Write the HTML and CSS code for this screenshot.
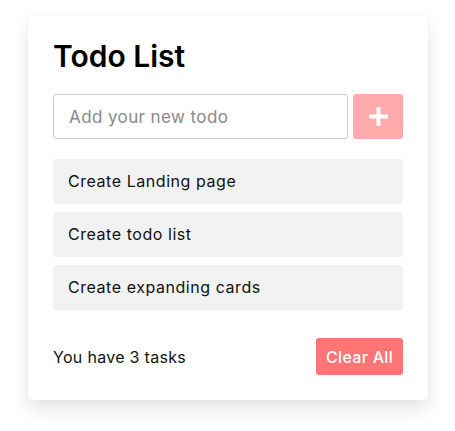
FILE: index.html
```html
<!DOCTYPE html>
<html lang="en">
<head>
<meta charset="utf-8">
<title>Todo List</title>
<link rel="stylesheet" href="styles.css">
</head>
<body>
<div class="wrapper">
  <h1 class="title">Todo List</h1>
  <div class="input-field">
    <input class="todo-input" type="text" placeholder="Add your new todo">
    <button class="add-btn" aria-label="Add">
      <svg width="19" height="19" viewBox="0 0 19 19"><path d="M9.5 1.5v16M1.5 9.5h16" stroke="#fff" stroke-width="4" stroke-linecap="round"/></svg>
    </button>
  </div>
  <ul class="todo-list">
    <li class="todo-item">Create Landing page</li>
    <li class="todo-item">Create todo list</li>
    <li class="todo-item">Create expanding cards</li>
  </ul>
  <div class="footer">
    <span class="count">You have 3 tasks</span>
    <button class="clear-btn">Clear All</button>
  </div>
</div>
</body>
</html>
```
FILE: styles.css
```css
* { box-sizing: border-box; }
html, body { height: 100%; }
body {
  margin: 0;
  min-height: 431px;
  padding: 15px 0 0 28px;
  background: #fff;
  font-family: Inter, "Open Sans", sans-serif;
  color: #111;
}
.wrapper {
  width: 400px;
  padding: 25px;
  background: #fff;
  border-radius: 5px;
  box-shadow: 0 10px 18px rgba(0,0,0,0.1), 0 0 6px rgba(0,0,0,0.03);
}
.title {
  margin: 0;
  font-size: 30px;
  line-height: 30px;
  font-weight: 600;
  color: #000;
  padding-top: 1px;
}
.input-field {
  display: flex;
  gap: 5px;
  height: 45px;
  margin-top: 23px;
}
.todo-input {
  flex: 1 1 0;
  width: 0;
  min-width: 0;
  height: 100%;
  border: 1px solid #ccc;
  border-radius: 3px;
  padding: 0 15px;
  font-family: inherit;
  font-size: 17px;
  letter-spacing: 0.4px;
  outline: none;
}
.todo-input::placeholder { color: #8a8a8a; }
.add-btn {
  flex: 0 0 50px;
  width: 50px;
  height: 100%;
  border: none;
  border-radius: 3px;
  background: #ff7575;
  opacity: 0.6;
  display: flex;
  align-items: center;
  justify-content: center;
  padding: 0;
}
.add-btn svg { display: block; }
.todo-list {
  list-style: none;
  margin: 20px 0 0;
  padding: 0;
  display: flex;
  flex-direction: column;
  gap: 8px;
}
.todo-item {
  height: 45px;
  line-height: 45px;
  background: #f2f2f2;
  border-radius: 3px;
  padding: 0 15px;
  font-size: 16px;
  letter-spacing: 0.55px;
  color: #111;
}
.footer {
  margin-top: 28px;
  display: flex;
  align-items: center;
  justify-content: space-between;
}
.count {
  font-size: 16px;
  letter-spacing: 0.3px;
  color: #111;
}
.clear-btn {
  height: 37px;
  padding: 0 10px;
  border: none;
  border-radius: 3px;
  background: #ff7575;
  color: #fff;
  font-family: inherit;
  font-size: 16px;
  font-weight: 500;
  letter-spacing: 0.3px;
}
```
